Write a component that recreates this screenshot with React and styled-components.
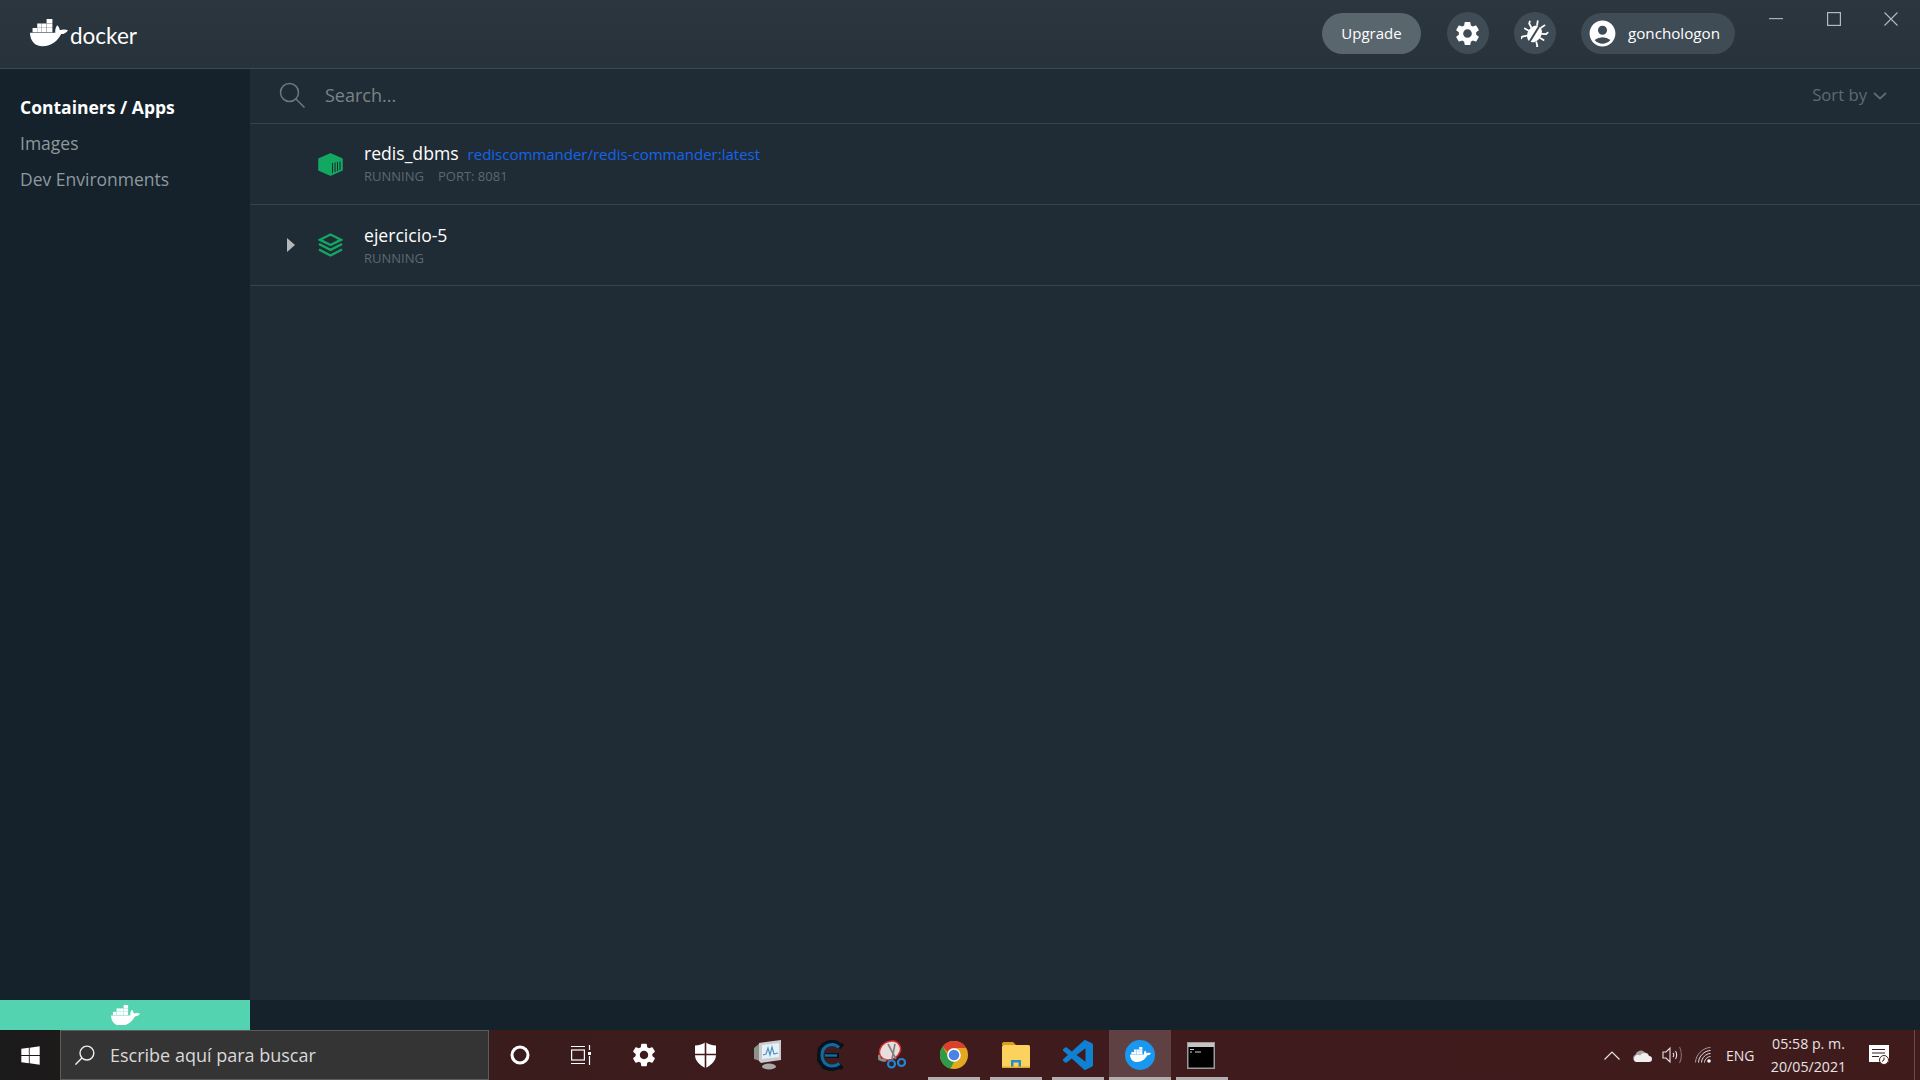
import React from 'react';
import styled, { createGlobalStyle } from 'styled-components';
import { MdSettings, MdAccountCircle } from 'react-icons/md';
import { FaWindows } from 'react-icons/fa';

const GlobalStyle = createGlobalStyle`
	html, body { margin: 0; padding: 0; background: #15222c; overflow: hidden; }
	* { box-sizing: border-box; }
`

const Page = styled.div`
	width: 1920px;
	height: 1080px;
	display: flex;
	flex-direction: column;
	font-family: 'Open Sans', sans-serif;
	color: #fff;
`

const Header = styled.header`
	flex: 0 0 69px;
	display: flex;
	align-items: center;
	padding: 0 0 2px 30px;
	background: linear-gradient(#2b363e, #27323a);
	border-bottom: 1px solid #3d484f;
`

const Logo = styled.div`
	display: flex;
	align-items: center;
	gap: 2px;
	margin-right: auto;
`

const Wordmark = styled.span`
	font-family: 'Lato', sans-serif;
	font-size: 22.5px;
	line-height: 30px;
	margin-top: 6px;
`

const UpgradeBtn = styled.div`
	width: 99px;
	height: 41px;
	border-radius: 21px;
	background: #5a666d;
	display: flex;
	align-items: center;
	justify-content: center;
	font-size: 15px;
`

const RoundBtn = styled.div`
	width: 42px;
	height: 42px;
	margin-left: ${props => props.left}px;
	border-radius: 50%;
	background: #3f4c55;
	display: flex;
	align-items: center;
	justify-content: center;
`

const UserPill = styled.div`
	width: 154px;
	height: 41px;
	margin-left: 25px;
	padding-left: 6px;
	border-radius: 21px;
	background: #3f4c55;
	display: flex;
	align-items: center;
	gap: 10px;
	font-size: 15.2px;
`

const WindowControls = styled.div`
	align-self: flex-start;
	margin-left: 12px;
	display: flex;
`

const WindowBtn = styled.div`
	width: 57.7px;
	height: 38px;
	display: flex;
	align-items: center;
	justify-content: center;
`

const Body = styled.div`
	flex: 1;
	display: flex;
	min-height: 0;
`

const Sidebar = styled.nav`
	flex: 0 0 250px;
	padding: 20px 20px 0;
	background: #15222c;
`

const NavItem = styled.div`
	height: 36px;
	line-height: 36px;
	font-size: 17.5px;
	white-space: nowrap;
	font-weight: ${props => props.active ? 700 : 400};
	color: ${props => props.active ? '#fff' : '#8f989e'};
`

const Main = styled.main`
	flex: 1;
	background: #202c35;
`

const SearchBar = styled.div`
	height: 55px;
	display: flex;
	align-items: center;
	padding: 0 33px 2px 29px;
	border-bottom: 1px solid #38434b;
`

const SearchText = styled.span`
	margin-left: 20px;
	margin-right: auto;
	font-size: 18px;
	color: #7b8389;
`

const SortBy = styled.div`
	display: flex;
	align-items: center;
	gap: 6px;
	font-size: 16.7px;
	line-height: 22px;
	margin-top: -1px;
	color: #5f6a71;
	svg { margin-top: 3px; }
`

const Row = styled.div`
	height: 81px;
	display: flex;
	align-items: center;
	padding-left: 68px;
	border-bottom: 1px solid #38434b;
	position: relative;
`

const Caret = styled.div`
	position: absolute;
	left: 37px;
	top: 33px;
	width: 0;
	height: 0;
	border-left: 8px solid #b4b8bb;
	border-top: 7.5px solid transparent;
	border-bottom: 7.5px solid transparent;
`

const RowText = styled.div`
	margin-left: 21px;
	display: flex;
	flex-direction: column;
	margin-top: ${props => props.top}px;
`

const NameLine = styled.div`
	display: flex;
	align-items: baseline;
	gap: 9px;
	height: 26px;
`

const Name = styled.span`
	font-size: 17.6px;
`

const ImageName = styled.span`
	font-size: 15px;
	color: #1464ec;
`

const Meta = styled.div`
	display: flex;
	gap: 14px;
	font-size: 13px;
	line-height: 18px;
	color: #5d676e;
`

const Footer = styled.div`
	flex: 0 0 30px;
	display: flex;
	background: #15222c;
`

const FooterWhale = styled.div`
	flex: 0 0 250px;
	background: #54d3b1;
	display: flex;
	align-items: center;
	justify-content: center;
`

const Taskbar = styled.div`
	flex: 0 0 50px;
	display: flex;
	background: linear-gradient(to right, #1b1a1a 0, #241a1a 300px, #3a1c1d 500px, #401b1d 900px, #3f1b1c 100%);
`

const StartBtn = styled.div`
	flex: 0 0 60px;
	display: flex;
	align-items: center;
	justify-content: center;
`

const TaskSearch = styled.div`
	flex: 0 0 429px;
	display: flex;
	align-items: center;
	padding-left: 14px;
	gap: 15px;
	background: #343434;
	border: 1px solid #5c5c5c;
	font-size: 18px;
	color: #d9d9d9;
`

const TaskBtn = styled.div`
	flex: 0 0 62px;
	position: relative;
	display: flex;
	align-items: center;
	justify-content: center;
	background: ${props => props.active ? 'rgba(255,255,255,0.17)' : 'transparent'};
	&:after {
		content: "";
		display: ${props => props.open ? 'block' : 'none'};
		position: absolute;
		bottom: 0;
		left: ${props => props.active ? 0 : 5}px;
		right: ${props => props.active ? 0 : 5}px;
		height: 3px;
		background: #b2aeae;
	}
`

const Tray = styled.div`
	flex: 1;
	display: flex;
	align-items: center;
	padding-left: 371px;
	position: relative;
`

const TraySlot = styled.div`
	display: flex;
	align-items: center;
	margin-left: ${props => props.left}px;
`

const Lang = styled.span`
	font-size: 14px;
	color: #e8e4e4;
`

const Clock = styled.div`
	width: 84px;
	text-align: center;
	font-size: 14.2px;
	line-height: 23px;
	color: #e8e4e4;
`

const TrayEdge = styled.div`
	position: absolute;
	right: 5px;
	top: 0;
	bottom: 0;
	width: 1px;
	background: #6b4a4a;
`

const Whale = ({ width, color = '#fff', cut = 'transparent' }) => (
	<svg width={width} viewBox="0 0 39 28" fill={color} style={{ display: 'block' }}>
		<path d="M0 14H26C25.5 11 26.5 8.5 28 6.5C29.8 8 30.5 10 30.5 11.5C33 10.5 36.5 10.5 39 11.5C37.5 14.5 34.5 15.5 32 15.5C29 22 22 28 13 28C5 28 0 22 0 14Z" />
		<g fill={color} stroke={cut} strokeWidth="0.5">
			<rect x="17" y="0" width="6" height="4.4" />
			<rect x="7.4" y="4.6" width="4.6" height="4.4" />
			<rect x="12.2" y="4.6" width="4.6" height="4.4" />
			<rect x="17" y="4.6" width="6" height="4.4" />
			<rect x="2.6" y="9.2" width="4.6" height="4.4" />
			<rect x="7.4" y="9.2" width="4.6" height="4.4" />
			<rect x="12.2" y="9.2" width="4.6" height="4.4" />
			<rect x="17" y="9.2" width="6" height="4.4" />
		</g>
	</svg>
)

const BugIcon = () => (
	<svg width="28" height="28" viewBox="0 0 28 28" fill="none" stroke="#fff" strokeWidth="1.800" strokeLinecap="round" strokeLinejoin="round">
		<g transform="rotate(32 14 14)">
			<ellipse cx="14" cy="15" rx="6.800" ry="9" fill="#fff" stroke="none" />
			<path d="M14 4V26" stroke="#3f4c55" strokeWidth="2" />
			<path d="M11.500 6L10 2.500M16.500 6L18 2.500M7.500 11L4 9L3.500 7M20.500 11L24 9L24.500 7M7 15.500H3M21 15.500H25M8 21L5 24V26M20 21L23 24V26" />
		</g>
	</svg>
)

const SearchIcon = ({ size, color, strokeWidth, flip }) => (
	<svg width={size} height={size} viewBox="0 0 26 26" fill="none" stroke={color} strokeWidth={strokeWidth} style={{ transform: flip ? 'scaleX(-1)' : 'none' }}>
		<circle cx="10.5" cy="10.5" r="9" />
		<path d="M17 17L25.5 25.5" />
	</svg>
)

const ContainerIcon = () => (
	<svg width="25" height="23" viewBox="0 0 25 23">
		<path d="M12.5 1L24 6V17L12.5 22L1 17V6Z" fill="#13a862" stroke="#13a862" strokeWidth="1.6" strokeLinejoin="round" />
		<path d="M14.5 10V20M17 9.500V19M19.500 9V18M22 8.500V17" stroke="#16272b" strokeWidth="1" />
	</svg>
)

const StackIcon = () => (
	<svg width="25" height="24" viewBox="0 0 25 24" fill="none" stroke="#13a862" strokeWidth="2.4">
		<path d="M12.5 1.5L23 6.8L12.5 12L2 6.8Z" />
		<path d="M1 11L12.5 16.8L24 11" />
		<path d="M1 16.5L12.5 22.5L24 16.5" />
	</svg>
)

const TaskViewIcon = () => (
	<svg width="20" height="20" viewBox="0 0 20 20" fill="none" stroke="#fff" strokeWidth="1.2" style={{ marginRight: 3 }}>
		<rect x="0.6" y="5" width="12.8" height="10" />
		<path d="M0 1.5H14M0 18.5H14M18.5 0V5M18.5 11V20" />
		<rect x="17" y="7" width="3" height="3" fill="#fff" stroke="none" />
	</svg>
)

const ShieldIcon = () => (
	<svg width="21" height="26" viewBox="0 0 21 26" style={{ marginRight: 2 }}>
		<path d="M10.5 0C8 2 4 3.500 0 3.500V13C0 19 5 23.500 10.500 26C16 23.500 21 19 21 13V3.500C17 3.500 13 2 10.500 0Z" fill="#fff" />
		<path d="M10.5 0V26M0 12.500H21" stroke="#45191b" strokeWidth="1.6" />
	</svg>
)

const MonitorIcon = () => (
	<svg width="27" height="30" viewBox="0 0 27 30" style={{ marginRight: 2 }}>
		<ellipse cx="15" cy="26.500" rx="7" ry="3" fill="#a9a9a9" />
		<path d="M0 8L6 3V21L0 19Z" fill="#8f8f8f" />
		<path d="M5 3L27 0V20L7 23L5 21Z" fill="#c9cccd" />
		<path d="M8 5L25 3V17L8 19Z" fill="#e6f0f6" />
		<path d="M9 15L12 14L14 8L16 15L18 7L20 14L24 13" fill="none" stroke="#4d8fc9" strokeWidth="1.2" />
		<rect x="1" y="8" width="2" height="2" fill="#41c441" />
	</svg>
)

const CheatIcon = () => (
	<svg width="27" height="31" viewBox="0 0 27 31" fill="none">
		<g stroke="#07131c">
			<path d="M23 7C20 3 15 2 11 3.500C5 5.500 3 10.500 3 15.500C3 22 7 28 15 28C18.500 28 21.500 27 24 24.500" strokeWidth="6" />
			<path d="M8 15.500H22" strokeWidth="5" />
			<path d="M12 1V4M20 1L18 5M26 4L22 8M1 8L5 10M0 21L4 19M6 29L8 25M14 30V27M25 29L22 25" strokeWidth="3.500" />
		</g>
		<g stroke="#0e6ba3">
			<path d="M22 7.500C19 4.500 15 4 12 5C7 6.500 5 10.500 5 15.500C5 21 8.500 26 15 26C18 26 20.500 25 22.500 23.500" strokeWidth="3" />
			<path d="M8 15.500H20" strokeWidth="2.500" />
		</g>
	</svg>
)

const SnipIcon = () => (
	<svg width="28" height="30" viewBox="0 0 28 30" fill="none">
		<ellipse cx="12" cy="10.500" rx="11" ry="9" fill="#e8dcdc" stroke="#d12a2a" strokeWidth="1.500" transform="rotate(-30 12 10.500)" />
		<path d="M8 20C3 21 0 19 1 15" stroke="#8a8a8a" strokeWidth="3" />
		<path d="M10 4L18 19M17 4L14 19" stroke="#808080" strokeWidth="1.600" />
		<circle cx="13.500" cy="24" r="3.500" stroke="#1e87d6" strokeWidth="2.200" />
		<circle cx="23.500" cy="22.500" r="3.500" stroke="#1e87d6" strokeWidth="2.200" />
	</svg>
)

const ChromeIcon = () => (
	<svg width="28" height="28" viewBox="0 0 28 28">
		<circle cx="14" cy="14" r="14" fill="#e2a81f" />
		<path d="M14 0A14 14 0 0 1 26.100 7H14A7 7 0 0 0 7.700 11L2.700 5.700A14 14 0 0 1 14 0Z" fill="#d9402f" />
		<path d="M2.700 5.700L7.900 14.500A7 7 0 0 0 14 21L10.500 27.600A14 14 0 0 1 2.700 5.700Z" fill="#2f9a4a" />
		<circle cx="14" cy="14" r="6.800" fill="#fff" />
		<circle cx="14" cy="14" r="5.300" fill="#4c82e6" />
	</svg>
)

const FolderIcon = () => (
	<svg width="28" height="26" viewBox="0 0 28 26">
		<path d="M0 2A2 2 0 0 1 2 0H11L14 3H0Z" fill="#d99e1c" />
		<rect x="0" y="3" width="28" height="23" rx="1.500" fill="#fbd25d" />
		<path d="M9 26V18H19V26H16.500V20.500H11.500V26Z" fill="#2a8ccb" />
		<rect x="0" y="24.500" width="28" height="1.500" fill="#e3a91f" />
	</svg>
)

const VsCodeIcon = () => (
	<svg width="30" height="30" viewBox="0 0 24 24" fill="#0f80d2">
		<path d="M23.15 2.587L18.21.21a1.494 1.494 0 0 0-1.705.29l-9.46 8.63-4.12-3.128a.999.999 0 0 0-1.276.057L.327 7.261A1 1 0 0 0 .326 8.74L3.899 12 .326 15.26a1 1 0 0 0 .001 1.479L1.65 17.94a.999.999 0 0 0 1.276.057l4.12-3.128 9.46 8.63a1.492 1.492 0 0 0 1.704.29l4.942-2.377A1.5 1.5 0 0 0 24 20.06V3.939a1.5 1.5 0 0 0-.85-1.352zm-5.146 14.861L10.826 12l7.178-5.448v10.896z" />
	</svg>
)

const DockerBadge = styled.div`
	width: 30px;
	height: 30px;
	border-radius: 50%;
	background: #1a97ee;
	display: flex;
	align-items: center;
	justify-content: center;
`

const TerminalIcon = () => (
	<svg width="28" height="27" viewBox="0 0 28 27" style={{ marginRight: 2 }}>
		<rect width="28" height="27" fill="#9a9a9a" />
		<rect x="1" y="1" width="26" height="4" fill="#c4c4c4" />
		<rect x="1.500" y="5" width="25" height="20.500" fill="#000" />
		<path d="M3 7.500H7M3 10H5M8 10H14" stroke="#cfcfcf" strokeWidth="1" />
	</svg>
)

const CloudIcon = () => (
	<svg width="20" height="13" viewBox="0 0 20 13">
		<path d="M4 13A4 4 0 0 1 3.500 5.500A5.500 5.500 0 0 1 13 3.500A4.500 4.500 0 0 1 17 8H8Z" fill="#a9a3a3" />
		<path d="M4 13H17A3 3 0 0 0 17 7A5 5 0 0 0 8 6.500A3.500 3.500 0 0 0 4 13Z" fill="#f1efef" />
	</svg>
)

const SpeakerIcon = () => (
	<svg width="20" height="20" viewBox="0 0 20 20" fill="none" stroke="#e8e4e4" strokeWidth="1.100">
		<path d="M1 7H4L8 3V17L4 13H1Z" />
		<path d="M11 8C12 9 12 11 11 12M13.500 6C15 8 15 12 13.500 14" />
		<path d="M17.500 2C20 6 20 14 17.500 18" stroke="#8a6f6f" />
	</svg>
)

const WifiIcon = () => (
	<svg width="16" height="16" viewBox="0 0 16 16" fill="none" stroke="#e8e4e4" strokeWidth="1">
		<path d="M0.500 15.500C0.500 8 8 0.500 15.500 0.500" stroke="#a79a9a" />
		<path d="M3.500 15.500C3.500 9.500 9.500 3.500 15.500 3.500M6.500 15.500C6.500 11 11 6.500 15.500 6.500M9.500 15.500C9.500 12.500 12.500 9.500 15.500 9.500" />
		<circle cx="14" cy="14" r="1.800" fill="#fff" stroke="none" />
	</svg>
)

const NotifyIcon = () => (
	<svg width="20" height="20" viewBox="0 0 20 20">
		<path d="M0 0H20V17H0Z" fill="#fff" />
		<path d="M3 4.500H16M3 8H16M3 11.500H10" stroke="#45191b" strokeWidth="1.100" />
		<circle cx="15" cy="15" r="4.500" fill="#fff" stroke="#45191b" strokeWidth="1" />
		<path d="M15 12.500V15L13 16.500" stroke="#45191b" strokeWidth="1" fill="none" />
	</svg>
)

const App = () => (
	<Page>
		<GlobalStyle />
		<Header>
			<Logo>
				<Whale width={38} />
				<Wordmark>docker</Wordmark>
			</Logo>
			<UpgradeBtn>Upgrade</UpgradeBtn>
			<RoundBtn left={26}><MdSettings size={29} color="#fff" /></RoundBtn>
			<RoundBtn left={25}><BugIcon /></RoundBtn>
			<UserPill>
				<MdAccountCircle size={31} color="#fff" />
				gonchologon
			</UserPill>
			<WindowControls>
				<WindowBtn>
					<svg width="14" height="2"><rect width="14" height="1.200" fill="#a9afb3" /></svg>
				</WindowBtn>
				<WindowBtn>
					<svg width="14" height="14" fill="none" stroke="#b4babd" strokeWidth="1.200" style={{ marginLeft: 2 }}><rect x="0.600" y="0.600" width="12.800" height="12.800" /></svg>
				</WindowBtn>
				<WindowBtn>
					<svg width="14" height="14" fill="none" stroke="#b4babd" strokeWidth="1.100"><path d="M0.500 0.500L13.500 13.500M13.500 0.500L0.500 13.500" /></svg>
				</WindowBtn>
			</WindowControls>
		</Header>
		<Body>
			<Sidebar>
				<NavItem active>Containers / Apps</NavItem>
				<NavItem>Images</NavItem>
				<NavItem>Dev Environments</NavItem>
			</Sidebar>
			<Main>
				<SearchBar>
					<SearchIcon size={26} color="#6d777d" strokeWidth={1.500} />
					<SearchText>Search...</SearchText>
					<SortBy>
						Sort by
						<svg width="14" height="8" fill="none" stroke="#5f6a71" strokeWidth="1.800"><path d="M1 1L7 6.500L13 1" /></svg>
					</SortBy>
				</SearchBar>
				<Row>
					<ContainerIcon />
					<RowText top={-2}>
						<NameLine>
							<Name>redis_dbms</Name>
							<ImageName>rediscommander/redis-commander:latest</ImageName>
						</NameLine>
						<Meta><span>RUNNING</span><span>PORT: 8081</span></Meta>
					</RowText>
				</Row>
				<Row>
					<Caret />
					<StackIcon />
					<RowText top={0}>
						<NameLine><Name>ejercicio-5</Name></NameLine>
						<Meta><span>RUNNING</span></Meta>
					</RowText>
				</Row>
			</Main>
		</Body>
		<Footer>
			<FooterWhale><Whale width={29} /></FooterWhale>
		</Footer>
		<Taskbar>
			<StartBtn><FaWindows size={21} color="#fff" /></StartBtn>
			<TaskSearch>
				<SearchIcon size={20} color="#f0f0f0" strokeWidth={1.800} flip />
				Escribe aquí para buscar
			</TaskSearch>
			<TaskBtn>
				<svg width="20" height="20" fill="none" stroke="#fff" strokeWidth="3"><circle cx="10" cy="10" r="8" /></svg>
			</TaskBtn>
			<TaskBtn><TaskViewIcon /></TaskBtn>
			<TaskBtn><MdSettings size={28} color="#fff" /></TaskBtn>
			<TaskBtn><ShieldIcon /></TaskBtn>
			<TaskBtn><MonitorIcon /></TaskBtn>
			<TaskBtn><CheatIcon /></TaskBtn>
			<TaskBtn><SnipIcon /></TaskBtn>
			<TaskBtn open><ChromeIcon /></TaskBtn>
			<TaskBtn open><FolderIcon /></TaskBtn>
			<TaskBtn open><VsCodeIcon /></TaskBtn>
			<TaskBtn open active><DockerBadge><Whale width={21} /></DockerBadge></TaskBtn>
			<TaskBtn open><TerminalIcon /></TaskBtn>
			<Tray>
				<svg width="16" height="9" fill="none" stroke="#e8e4e4" strokeWidth="1.200"><path d="M0.500 8.500L8 1L15.500 8.500" /></svg>
				<TraySlot left={12}><CloudIcon /></TraySlot>
				<TraySlot left={10}><SpeakerIcon /></TraySlot>
				<TraySlot left={13}><WifiIcon /></TraySlot>
				<TraySlot left={15}><Lang>ENG</Lang></TraySlot>
				<TraySlot left={12}><Clock>05:58 p. m.<br />20/05/2021</Clock></TraySlot>
				<TraySlot left={18}><NotifyIcon /></TraySlot>
				<TrayEdge />
			</Tray>
		</Taskbar>
	</Page>
)

export default App;
